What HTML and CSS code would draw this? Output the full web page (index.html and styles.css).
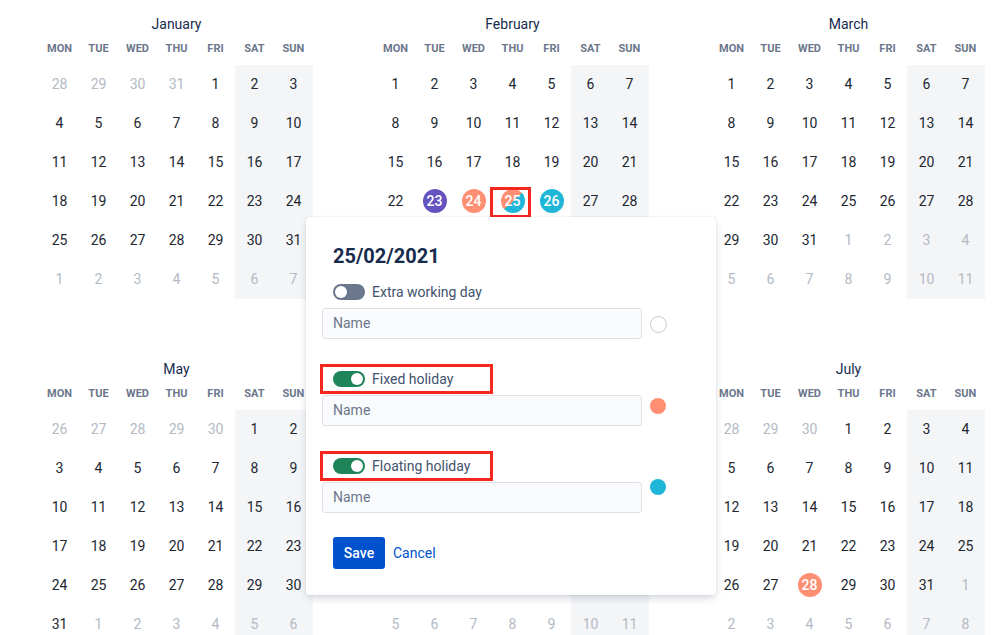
FILE: index.html
```html
<!DOCTYPE html>
<html lang="en">
<head>
<meta charset="utf-8">
<title>Holiday calendar</title>
<link rel="stylesheet" href="styles.css">
</head>
<body>
<div class="page">
  <div class="year">
    <section class="month">
      <h2 class="mtitle">January</h2>
      <div class="wk"><span>MON</span><span>TUE</span><span>WED</span><span>THU</span><span>FRI</span><span>SAT</span><span>SUN</span></div>
      <div class="days">
        <span class="d o">28</span><span class="d o">29</span><span class="d o">30</span><span class="d o">31</span><span class="d">1</span><span class="d">2</span><span class="d">3</span>
        <span class="d">4</span><span class="d">5</span><span class="d">6</span><span class="d">7</span><span class="d">8</span><span class="d">9</span><span class="d">10</span>
        <span class="d">11</span><span class="d">12</span><span class="d">13</span><span class="d">14</span><span class="d">15</span><span class="d">16</span><span class="d">17</span>
        <span class="d">18</span><span class="d">19</span><span class="d">20</span><span class="d">21</span><span class="d">22</span><span class="d">23</span><span class="d">24</span>
        <span class="d">25</span><span class="d">26</span><span class="d">27</span><span class="d">28</span><span class="d">29</span><span class="d">30</span><span class="d">31</span>
        <span class="d o">1</span><span class="d o">2</span><span class="d o">3</span><span class="d o">4</span><span class="d o">5</span><span class="d o">6</span><span class="d o">7</span>
      </div>
    </section>
    <section class="month">
      <h2 class="mtitle">February</h2>
      <div class="wk"><span>MON</span><span>TUE</span><span>WED</span><span>THU</span><span>FRI</span><span>SAT</span><span>SUN</span></div>
      <div class="days">
        <span class="d">1</span><span class="d">2</span><span class="d">3</span><span class="d">4</span><span class="d">5</span><span class="d">6</span><span class="d">7</span>
        <span class="d">8</span><span class="d">9</span><span class="d">10</span><span class="d">11</span><span class="d">12</span><span class="d">13</span><span class="d">14</span>
        <span class="d">15</span><span class="d">16</span><span class="d">17</span><span class="d">18</span><span class="d">19</span><span class="d">20</span><span class="d">21</span>
        <span class="d">22</span><span class="d"><b class="mark purple">23</b></span><span class="d"><b class="mark coral">24</b></span><span class="d"><b class="mark split">25</b><i class="hl"></i></span><span class="d"><b class="mark cyan">26</b></span><span class="d">27</span><span class="d">28</span>
        <span class="d"></span><span class="d"></span><span class="d"></span><span class="d"></span><span class="d"></span><span class="d"></span><span class="d"></span>
        <span class="d"></span><span class="d"></span><span class="d"></span><span class="d"></span><span class="d"></span><span class="d"></span><span class="d"></span>
      </div>
    </section>
    <section class="month">
      <h2 class="mtitle">March</h2>
      <div class="wk"><span>MON</span><span>TUE</span><span>WED</span><span>THU</span><span>FRI</span><span>SAT</span><span>SUN</span></div>
      <div class="days">
        <span class="d">1</span><span class="d">2</span><span class="d">3</span><span class="d">4</span><span class="d">5</span><span class="d">6</span><span class="d">7</span>
        <span class="d">8</span><span class="d">9</span><span class="d">10</span><span class="d">11</span><span class="d">12</span><span class="d">13</span><span class="d">14</span>
        <span class="d">15</span><span class="d">16</span><span class="d">17</span><span class="d">18</span><span class="d">19</span><span class="d">20</span><span class="d">21</span>
        <span class="d">22</span><span class="d">23</span><span class="d">24</span><span class="d">25</span><span class="d">26</span><span class="d">27</span><span class="d">28</span>
        <span class="d">29</span><span class="d">30</span><span class="d">31</span><span class="d o">1</span><span class="d o">2</span><span class="d o">3</span><span class="d o">4</span>
        <span class="d o">5</span><span class="d o">6</span><span class="d o">7</span><span class="d o">8</span><span class="d o">9</span><span class="d o">10</span><span class="d o">11</span>
      </div>
    </section>
    <section class="month">
      <h2 class="mtitle">May</h2>
      <div class="wk"><span>MON</span><span>TUE</span><span>WED</span><span>THU</span><span>FRI</span><span>SAT</span><span>SUN</span></div>
      <div class="days">
        <span class="d o">26</span><span class="d o">27</span><span class="d o">28</span><span class="d o">29</span><span class="d o">30</span><span class="d">1</span><span class="d">2</span>
        <span class="d">3</span><span class="d">4</span><span class="d">5</span><span class="d">6</span><span class="d">7</span><span class="d">8</span><span class="d">9</span>
        <span class="d">10</span><span class="d">11</span><span class="d">12</span><span class="d">13</span><span class="d">14</span><span class="d">15</span><span class="d">16</span>
        <span class="d">17</span><span class="d">18</span><span class="d">19</span><span class="d">20</span><span class="d">21</span><span class="d">22</span><span class="d">23</span>
        <span class="d">24</span><span class="d">25</span><span class="d">26</span><span class="d">27</span><span class="d">28</span><span class="d">29</span><span class="d">30</span>
        <span class="d">31</span><span class="d o">1</span><span class="d o">2</span><span class="d o">3</span><span class="d o">4</span><span class="d o">5</span><span class="d o">6</span>
      </div>
    </section>
    <section class="month">
      <h2 class="mtitle"></h2>
      <div class="wk"><span></span><span></span><span></span><span></span><span></span><span></span><span></span></div>
      <div class="days">
        <span class="d"></span><span class="d"></span><span class="d"></span><span class="d"></span><span class="d"></span><span class="d"></span><span class="d"></span>
        <span class="d"></span><span class="d"></span><span class="d"></span><span class="d"></span><span class="d"></span><span class="d"></span><span class="d"></span>
        <span class="d"></span><span class="d"></span><span class="d"></span><span class="d"></span><span class="d"></span><span class="d"></span><span class="d"></span>
        <span class="d"></span><span class="d"></span><span class="d"></span><span class="d"></span><span class="d"></span><span class="d"></span><span class="d"></span>
        <span class="d"></span><span class="d"></span><span class="d"></span><span class="d"></span><span class="d"></span><span class="d"></span><span class="d"></span>
        <span class="d o">5</span><span class="d o">6</span><span class="d o">7</span><span class="d o">8</span><span class="d o">9</span><span class="d o">10</span><span class="d o">11</span>
      </div>
    </section>
    <section class="month">
      <h2 class="mtitle">July</h2>
      <div class="wk"><span>MON</span><span>TUE</span><span>WED</span><span>THU</span><span>FRI</span><span>SAT</span><span>SUN</span></div>
      <div class="days">
        <span class="d o">28</span><span class="d o">29</span><span class="d o">30</span><span class="d">1</span><span class="d">2</span><span class="d">3</span><span class="d">4</span>
        <span class="d">5</span><span class="d">6</span><span class="d">7</span><span class="d">8</span><span class="d">9</span><span class="d">10</span><span class="d">11</span>
        <span class="d">12</span><span class="d">13</span><span class="d">14</span><span class="d">15</span><span class="d">16</span><span class="d">17</span><span class="d">18</span>
        <span class="d">19</span><span class="d">20</span><span class="d">21</span><span class="d">22</span><span class="d">23</span><span class="d">24</span><span class="d">25</span>
        <span class="d">26</span><span class="d">27</span><span class="d"><b class="mark coral">28</b></span><span class="d">29</span><span class="d">30</span><span class="d">31</span><span class="d o">1</span>
        <span class="d o">2</span><span class="d o">3</span><span class="d o">4</span><span class="d o">5</span><span class="d o">6</span><span class="d o">7</span><span class="d o">8</span>
      </div>
    </section>
  </div>

  <div class="popup">
    <h1 class="ptitle">25/02/2021</h1>
    <div class="sec">
      <div class="lbl"><span class="tg"></span><span class="ltext">Extra working day</span></div>
      <div class="field"><div class="input">Name</div><span class="dot dot-empty"></span></div>
    </div>
    <div class="sec">
      <div class="lbl lbl-red"><span class="tg on"></span><span class="ltext">Fixed holiday</span></div>
      <div class="field"><div class="input">Name</div><span class="dot dot-coral"></span></div>
    </div>
    <div class="sec">
      <div class="lbl lbl-red"><span class="tg on"></span><span class="ltext">Floating holiday</span></div>
      <div class="field"><div class="input">Name</div><span class="dot dot-cyan"></span></div>
    </div>
    <div class="actions">
      <button class="btn-save">Save</button>
      <button class="btn-cancel">Cancel</button>
    </div>
  </div>
</div>
</body>
</html>
```

FILE: styles.css
```css
html, body {
  margin: 0;
  padding: 0;
}
body {
  font-family: Roboto, "Noto Sans", "Liberation Sans", sans-serif;
  background: #fff;
  overflow: hidden;
  height: 635px;
}
.page {
  position: relative;
  width: 999px;
  height: 635px;
  overflow: hidden;
}
.year {
  display: grid;
  grid-template-columns: repeat(3, 273px);
  column-gap: 63px;
  row-gap: 60.5px;
  padding: 14px 0 0 40px;
}
.mtitle {
  margin: 0;
  height: 20px;
  line-height: 20px;
  text-align: center;
  font-size: 14px;
  font-weight: 400;
  color: #172b4d;
}
.wk {
  display: grid;
  grid-template-columns: repeat(7, 39px);
  margin-top: 5px;
  height: 20px;
  line-height: 20px;
}
.wk span {
  text-align: center;
  font-size: 11px;
  font-weight: 700;
  color: #6b778c;
}
.days {
  display: grid;
  grid-template-columns: repeat(7, 39px);
  grid-auto-rows: 39px;
  margin-top: 5.5px;
}
.d {
  display: flex;
  align-items: center;
  justify-content: center;
  font-size: 14px;
  color: #222831;
  position: relative;
}
.d:nth-child(7n-1),
.d:nth-child(7n) {
  background: #f4f5f7;
}
.o {
  color: #b3bac5;
}
.mark {
  width: 24px;
  height: 24px;
  border-radius: 50%;
  display: flex;
  align-items: center;
  justify-content: center;
  color: #fff;
  font-weight: 500;
}
.purple { background: #6554c0; }
.coral { background: #ff8f73; }
.cyan { background: #1fb6d8; }
.split { background: linear-gradient(135deg, #ff8f73 50%, #1fb6d8 50%); }
.hl {
  position: absolute;
  left: -3px;
  top: 5.5px;
  width: 41px;
  height: 31px;
  border: 3px solid #f5281d;
  box-sizing: border-box;
}

/* popup */
.popup {
  position: absolute;
  left: 306px;
  top: 217px;
  width: 410px;
  height: 378px;
  box-sizing: border-box;
  padding: 27px 0 0 16px;
  background: #fff;
  border-radius: 3px;
  box-shadow: 0 4px 10px -2px rgba(9, 30, 66, 0.22), 0 0 1px rgba(9, 30, 66, 0.28);
}
.ptitle {
  margin: 0 0 0 11px;
  font-size: 20px;
  line-height: 24px;
  font-weight: 700;
  color: #172b4d;
}
.sec {
  margin-bottom: 25px;
}
.sec:first-of-type {
  margin-top: 9px;
}
.lbl {
  box-sizing: border-box;
  width: 173px;
  height: 30px;
  margin-left: -2px;
  padding-left: 10px;
  border: 3px solid transparent;
  display: flex;
  align-items: center;
  gap: 7px;
}
.lbl-red {
  border-color: #f5281d;
}
.ltext {
  font-size: 14px;
  color: #42526e;
}
.tg {
  position: relative;
  width: 32px;
  height: 16px;
  border-radius: 8px;
  background: #6b778c;
  flex: none;
}
.tg::after {
  content: "";
  position: absolute;
  top: 2px;
  left: 2px;
  width: 12px;
  height: 12px;
  border-radius: 50%;
  background: #fff;
}
.tg.on {
  background: #1f845a;
}
.tg.on::after {
  left: 18px;
}
.field {
  display: flex;
  align-items: flex-start;
  gap: 8px;
  margin-top: 1px;
}
.input {
  box-sizing: border-box;
  width: 320px;
  height: 31px;
  padding: 0 10px;
  line-height: 29px;
  border: 1px solid #dfe1e6;
  border-radius: 3px;
  background: #fafbfc;
  font-size: 14px;
  color: #6b778c;
}
.dot {
  width: 16px;
  height: 16px;
  border-radius: 50%;
  box-sizing: border-box;
  flex: none;
}
.dot-empty {
  width: 17px;
  height: 17px;
  border: 1.5px solid #c1c7d0;
  margin-top: 8px;
}
.dot-coral {
  background: #ff8f73;
  margin-top: 3px;
}
.dot-cyan {
  background: #1fb6d8;
  margin-top: -3px;
}
.actions {
  display: flex;
  align-items: center;
  gap: 8px;
  margin: -1px 0 0 11px;
}
.btn-save {
  width: 52px;
  height: 32px;
  border: 0;
  border-radius: 3px;
  background: #0052cc;
  color: #fff;
  font-family: inherit;
  font-size: 14px;
  font-weight: 500;
  padding: 0;
}
.btn-cancel {
  border: 0;
  background: none;
  padding: 0;
  color: #0052cc;
  font-family: inherit;
  font-size: 14px;
}
```
